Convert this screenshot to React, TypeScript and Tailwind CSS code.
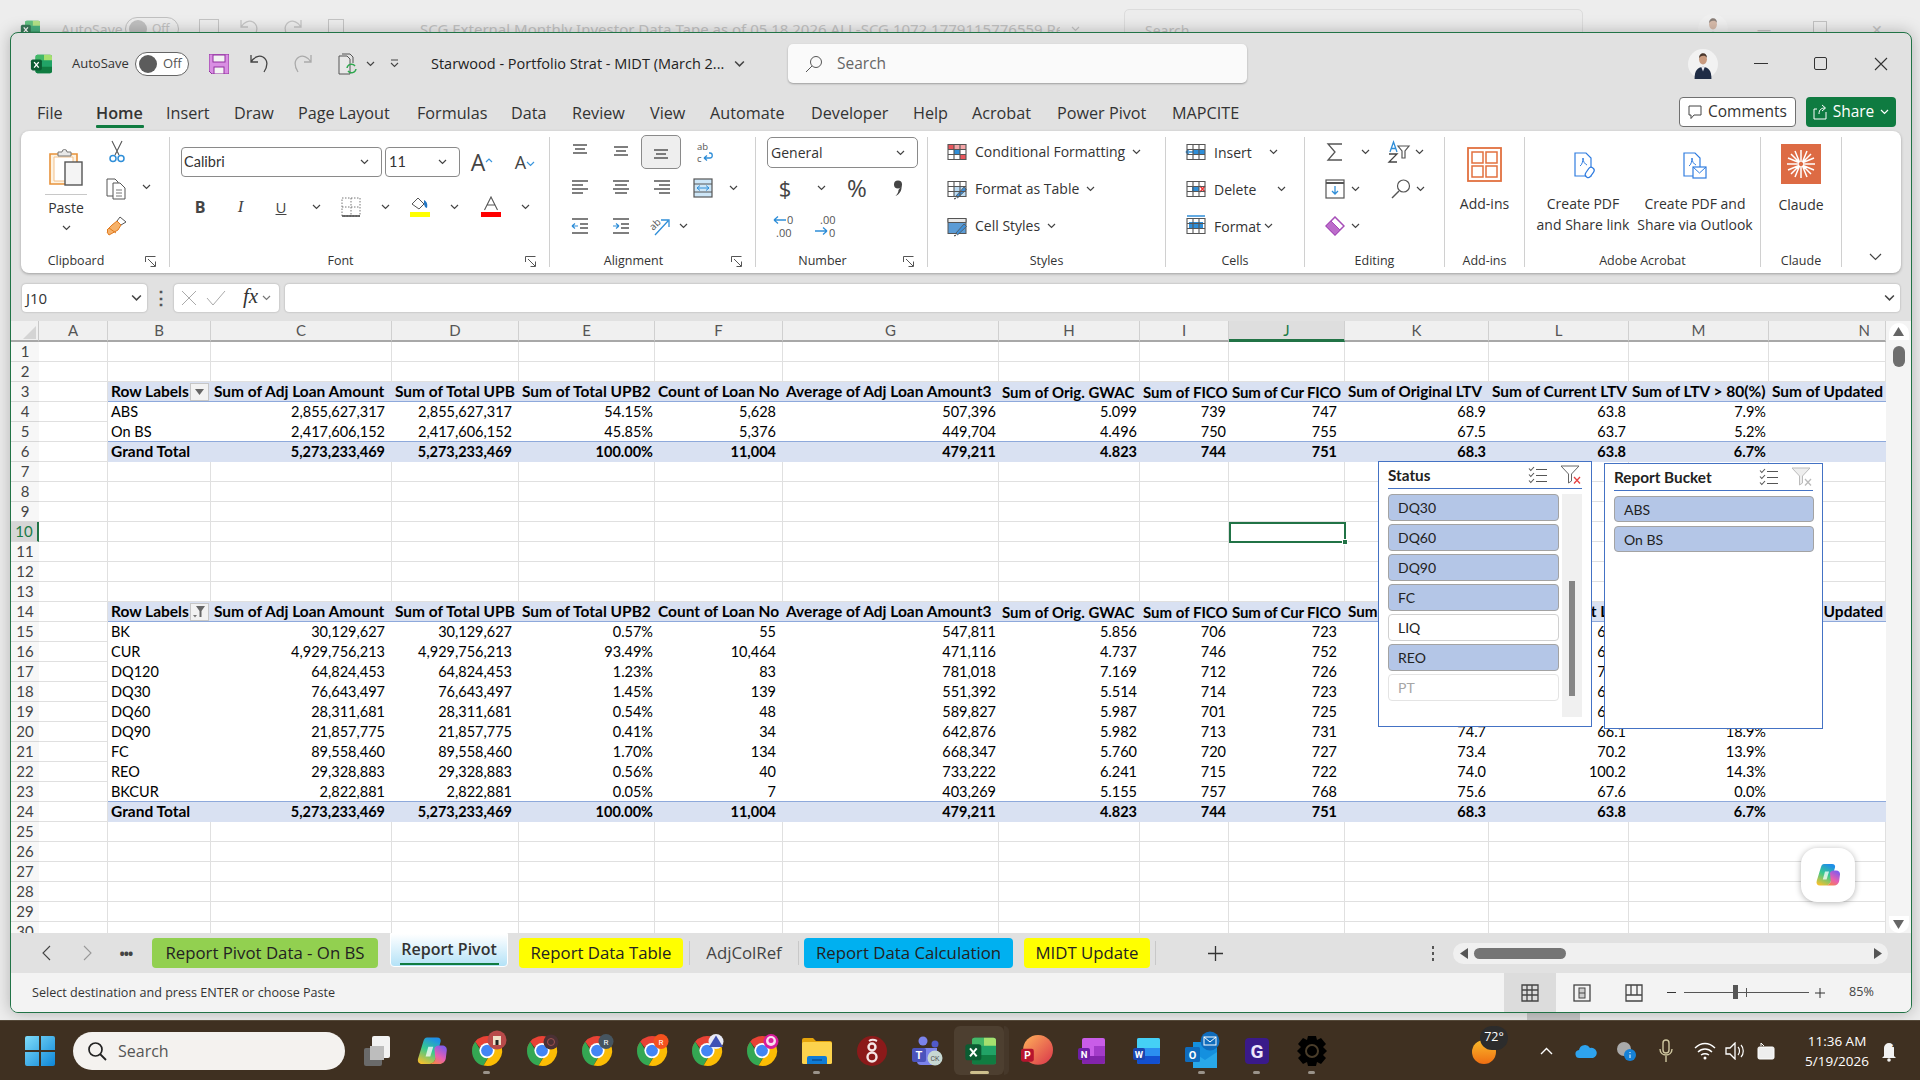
import React from "react";

const Chev = ({ c = "#444", className = "" }: { c?: string; className?: string }) => (
  <svg width="9" height="6" viewBox="0 0 9 6" className={className}><path d="M1 1l3.5 3.5L8 1" fill="none" stroke={c} strokeWidth="1.2" /></svg>
);
const Launcher = () => (
  <svg width="11" height="11" viewBox="0 0 11 11"><path d="M.5 6V.5H10.5M3 3l7 7M5.5 10.5h5v-5" fill="none" stroke="#555" strokeWidth="1" /></svg>
);
const Lines = ({ rows, c = "#555" }: { rows: number[][]; c?: string }) => (
  <svg width="20" height="20" viewBox="0 0 20 20">{rows.map((r, i) => <path key={i} d={`M${r[0]} ${r[2]}H${r[1]}`} stroke={c} strokeWidth="1.4" fill="none" />)}</svg>
);
const Cell = ({ w, children, className = "" }: { w: string; children?: React.ReactNode; className?: string }) => (
  <div className={`${w} flex items-center justify-center shrink-0 ${className}`}>{children}</div>
);

const ExcelIcon = ({ s = 22 }: { s?: number }) => (
  <svg width={s} height={s} viewBox="0 0 24 24">
    <rect x="6" y="2" width="18" height="20" rx="2" fill="#21a366" />
    <path d="M15 2h7a2 2 0 0 1 2 2v4h-9z" fill="#a6e06f" />
    <path d="M6 4a2 2 0 0 1 2-2h7v6H6z" fill="#43b868" />
    <path d="M6 15h18v5a2 2 0 0 1-2 2H8a2 2 0 0 1-2-2z" fill="#107c41" />
    <rect x="1" y="7" width="12" height="12" rx="2" fill="#0b5c32" />
    <path d="M4.5 10l5 6M9.5 10l-5 6" stroke="#fff" strokeWidth="1.5" />
  </svg>
);
const Avatar = ({ s = 32 }: { s?: number }) => (
  <svg width={s} height={s} viewBox="0 0 32 32">
    <circle cx="16" cy="16" r="16" fill="#f2f2f2" />
    <path d="M7 32c0-9 3-12 9-13 6 1 9 4 9 13z" fill="#1f2c45" />
    <path d="M14 19l2 5 2-5z" fill="#e8e8f0" />
    <ellipse cx="16" cy="11" rx="4.2" ry="5.4" fill="#c99a7e" />
    <path d="M11.8 10c0-4 2-5.6 4.4-5.6s4 1.6 4 5c-1-1.8-2.4-2.4-4.2-2.2-2 .2-3.4 1-4.2 2.8z" fill="#4a372c" />
  </svg>
);
const GridIcon = ({ children }: { children?: React.ReactNode }) => (
  <svg width="22" height="22" viewBox="0 0 22 22">
    {children}
    <path d="M2 3.5h18v15H2zM2 8.5h18M2 13.5h18M8 3.5v15M14 3.5v15" fill="none" stroke="#555" strokeWidth="1.1" />
  </svg>
);
const Brush = () => <path d="M10 18l8-9 2.5 2.5-9 8.5zM9 20l-1 1 2-.5z" fill="#3e8fd8" stroke="#555" strokeWidth=".8" />;

const Chrome = ({ badge }: { badge?: React.ReactNode }) => (
  <svg width="34" height="34" viewBox="0 0 34 34" className="overflow-visible">
    <path d="M2 17A15 15 0 0 1 30 9.5H17a7.5 7.5 0 0 0-7 4.5L5.2 7.8z" fill="#e94235" />
    <path d="M2 17c0-3.600 1.200-6.800 3.300-9.300L12 19c1.300 2.400 4 3.800 6.600 3.300l-5 9.300C6.900 30.500 2 24.400 2 17z" fill="#34a853" />
    <path d="M30 9.500A15 15 0 0 1 13.600 31.600L20.600 19.800c1.800-2.500 1.600-6.700-3.600-10.300z" fill="#fbbc04" />
    <circle cx="17" cy="16.600" r="7.600" fill="#fff" />
    <circle cx="17" cy="16.600" r="5.900" fill="#4285f4" />
    {badge}
  </svg>
);
const Copilot = ({ s = 26, id }: { s?: number; id: string }) => (
  <svg width={s} height={s} viewBox="0 0 26 26">
    <defs>
      <linearGradient id={`${id}a`} x1="0.6" y1="0" x2="0.2" y2="1"><stop offset="0" stopColor="#1f8fe8" /><stop offset=".45" stopColor="#37c98f" /><stop offset="1" stopColor="#f7c02c" /></linearGradient>
      <linearGradient id={`${id}b`} x1="0.8" y1="0" x2="0.2" y2="1"><stop offset="0" stopColor="#7a5cf0" /><stop offset=".55" stopColor="#e85fb0" /><stop offset="1" stopColor="#f58a3c" /></linearGradient>
    </defs>
    <path d="M9 2h8c2.500 0 3.500 1.600 3 3.500L16 19c-.7 2.400-2.700 4.500-5.500 4.500H5c-2.800 0-4-2-3.300-4.500L6 5c.5-1.800 1.500-3 3-3z" fill={`url(#${id}a)`} />
    <path d="M15 11c.5-1.500 1.800-2.500 3.500-2.500H21c2.800 0 4.300 1.700 4 4l-.8 6.500c-.4 2.500-2.500 4.500-5.200 4.500H10.500c2.600 0 4.600-1.800 5.200-4z" fill={`url(#${id}b)`} />
    <path d="M10 9.500h4l-2.400 8h-3.800z" fill="#fff" opacity=".75" />
  </svg>
);

const TABS: [string, string][] = [
  ["File", "w-[59px]"], ["Home", "w-[70px]"], ["Insert", "w-[68px]"], ["Draw", "w-[64px]"], ["Page Layout", "w-[119px]"],
  ["Formulas", "w-[94px]"], ["Data", "w-[61px]"], ["Review", "w-[78px]"], ["View", "w-[60px]"], ["Automate", "w-[101px]"],
  ["Developer", "w-[102px]"], ["Help", "w-[59px]"], ["Acrobat", "w-[85px]"], ["Power Pivot", "w-[115px]"], ["MAPCITE", "w-[90px]"],
];
const COLS = ["A", "B", "C", "D", "E", "F", "G", "H", "I", "J", "K", "L", "M", "N"];
const GRID = "grid grid-cols-[28px_69px_103px_181px_127px_136px_128px_216px_141px_89px_116px_144px_140px_140px_117px]";
const PAD = ["pr-[7px]", "pr-[7px]", "pr-[2px]", "pr-[7px]", "pr-[3px]", "pr-[3px]", "pr-[3px]", "pr-[8px]", "pr-[3px]", "pr-[3px]", "pr-[3px]", "pr-[3px]"];
const HEADSZ = ["text-[15.5px]", "text-[15.5px]", "text-[15.5px]", "text-[15.5px]", "text-[15.5px]", "text-[15.5px]", "text-[15px]", "text-[15px]", "text-[15px] tracking-[-0.2px]", "text-[15.2px]", "text-[15.5px]", "text-[15.5px]", "text-[15.5px]"];

const HEAD = ["Row Labels", "Sum of Adj Loan Amount", "Sum of Total UPB", "Sum of Total UPB2", "Count of Loan No", "Average of Adj Loan Amount3", "Sum of Orig. GWAC", "Sum of FICO", "Sum of Cur FICO", "Sum of Original LTV", "Sum of Current LTV", "Sum of LTV > 80(%)", "Sum of Updated"];
const TOTAL = ["Grand Total", "5,273,233,469", "5,273,233,469", "100.00%", "11,004", "479,211", "4.823", "744", "751", "68.3", "63.8", "6.7%", ""];
const DATA: Record<number, string[]> = {
  4: ["ABS", "2,855,627,317", "2,855,627,317", "54.15%", "5,628", "507,396", "5.099", "739", "747", "68.9", "63.8", "7.9%", ""],
  5: ["On BS", "2,417,606,152", "2,417,606,152", "45.85%", "5,376", "449,704", "4.496", "750", "755", "67.5", "63.7", "5.2%", ""],
  15: ["BK", "30,129,627", "30,129,627", "0.57%", "55", "547,811", "5.856", "706", "723", "70.4", "66.0", "12.1%", ""],
  16: ["CUR", "4,929,756,213", "4,929,756,213", "93.49%", "10,464", "471,116", "4.737", "746", "752", "67.9", "63.5", "6.2%", ""],
  17: ["DQ120", "64,824,453", "64,824,453", "1.23%", "83", "781,018", "7.169", "712", "726", "74.4", "70.4", "15.2%", ""],
  18: ["DQ30", "76,643,497", "76,643,497", "1.45%", "139", "551,392", "5.514", "714", "723", "72.2", "66.2", "11.8%", ""],
  19: ["DQ60", "28,311,681", "28,311,681", "0.54%", "48", "589,827", "5.987", "701", "725", "72.9", "65.8", "10.4%", ""],
  20: ["DQ90", "21,857,775", "21,857,775", "0.41%", "34", "642,876", "5.982", "713", "731", "74.7", "66.1", "18.9%", ""],
  21: ["FC", "89,558,460", "89,558,460", "1.70%", "134", "668,347", "5.760", "720", "727", "73.4", "70.2", "13.9%", ""],
  22: ["REO", "29,328,883", "29,328,883", "0.56%", "40", "733,222", "6.241", "715", "722", "74.0", "100.2", "14.3%", ""],
  23: ["BKCUR", "2,822,881", "2,822,881", "0.05%", "7", "403,269", "5.155", "757", "768", "75.6", "67.6", "0.0%", ""],
};
const TOTAL_ROWS = [6, 24];
const HEAD_ROWS = [3, 14];

const RowHead = ({ n }: { n: number }) => (
  <div className={`flex items-center justify-center border-b border-[#d8d8d8] text-[15px] leading-none ${n === 10 ? "bg-[#d6d6d6] text-[#1a7a46] border-r-2 border-r-[#217346]" : "bg-[#f7f7f7] text-[#444]"}`}>{n}</div>
);
const FilterBtn = ({ active }: { active?: boolean }) => (
  <div className="ml-auto mr-[2px] w-[19px] h-[18px] -mt-[1px] bg-[#f2f2f2] border border-[#c6c6c6] flex items-center justify-center shrink-0">
    {active ? (
      <svg width="13" height="13" viewBox="0 0 13 13"><path d="M3 1h9L8.500 6v6h-2V6z" fill="#666" /><path d="M0 10h4l-2 2.500z" fill="#777" /></svg>
    ) : (
      <svg width="9" height="6" viewBox="0 0 9 6"><path d="M0 0h9L4.500 6z" fill="#666" /></svg>
    )}
  </div>
);

const Row = ({ n }: { n: number }) => {
  const h = HEAD_ROWS.includes(n);
  const t = TOTAL_ROWS.includes(n);
  const vals = h ? HEAD : t ? TOTAL : DATA[n];
  const plain = "border-b border-r border-[#e0e0e0]";
  if (!vals) {
    return (
      <div className={`${GRID} grid-rows-[20px] h-[20px]`}>
        <RowHead n={n} />
        {COLS.map((c) => <div key={c} className={plain} />)}
      </div>
    );
  }
  const lastBlue = n === 5 || n === 23;
  const rowCls = h ? "bg-[#d9e1f2] border-b border-[#8ea9db] font-bold" : t ? "bg-[#d9e1f2] border-b border-[#d9e1f2] font-bold" : lastBlue ? "border-b border-[#8ea9db]" : "border-b border-transparent";
  return (
    <div className={`${GRID} grid-rows-[20px] h-[20px]`}>
      <RowHead n={n} />
      <div className={plain} />
      {vals.map((v, i) => (
        <div key={i} className={`${rowCls} flex items-center whitespace-nowrap overflow-hidden text-black leading-none pt-[1px] ${h ? HEADSZ[i] : t && i === 0 ? "text-[15.5px]" : "text-[14.5px]"} ${h || i === 0 ? "pl-[3px]" : `justify-end ${PAD[i - 1]}`}`}>
          {v}
          {h && i === 0 && <FilterBtn active={n === 14} />}
        </div>
      ))}
    </div>
  );
};

const SelectAll = () => (
  <svg width="20" height="18" viewBox="0 0 20 18"><path d="M1 2.500l1.800 2L6 1M1 8.500l1.800 2L6 7M1 14.500l1.800 2L6 13" fill="none" stroke="#555" strokeWidth="1.1" /><path d="M8 3.500h11M8 9.500h11M8 15.500h11" stroke="#555" strokeWidth="1.2" /></svg>
);
const ClearFilter = ({ on }: { on: boolean }) => (
  <svg width="21" height="20" viewBox="0 0 21 20"><path d="M1 1h18l-7.500 8v7l-3 2V9z" fill={on ? "#fff" : "#eee"} stroke={on ? "#666" : "#bbb"} strokeWidth="1" /><path d="M14 12l6 6.500M20 12l-6 6.500" stroke={on ? "#e64040" : "#bbb"} strokeWidth="1.3" /></svg>
);
const SlicerBtn = ({ t, state, h }: { t: string; state: "on" | "off" | "dim"; h: string }) => (
  <div className={`${h} rounded-[4px] pl-[9px] flex items-center text-[14px] border ${state === "on" ? "bg-[#b4c6e7] border-[#a3a3a3] text-[#222]" : state === "off" ? "bg-white border-[#d0d0d0] text-[#222]" : "bg-white border-[#e4e4e4] text-[#a6a6a6]"}`}>{t}</div>
);

const StatusSlicer = () => (
  <div className="absolute left-[1367px] top-[140px] w-[214px] h-[266px] bg-white border-[1.5px] border-[#4472c4] pl-[9px] pr-[9px]">
    <div className="h-[27px] flex items-center border-b border-[#4472c4] font-bold text-[15.3px] text-[#222]">
      <span>Status</span>
      <div className="ml-auto mr-[12px]"><SelectAll /></div>
      <div className="mr-[1px]"><ClearFilter on /></div>
    </div>
    <div className="flex mt-[5px]">
      <div className="w-[171px] flex flex-col gap-[3px]">
        <SlicerBtn t="DQ30" state="on" h="h-[27px]" />
        <SlicerBtn t="DQ60" state="on" h="h-[27px]" />
        <SlicerBtn t="DQ90" state="on" h="h-[27px]" />
        <SlicerBtn t="FC" state="on" h="h-[27px]" />
        <SlicerBtn t="LIQ" state="off" h="h-[27px]" />
        <SlicerBtn t="REO" state="on" h="h-[27px]" />
        <SlicerBtn t="PT" state="dim" h="h-[27px]" />
      </div>
      <div className="ml-[3px] w-[20px] h-[223px] bg-[#f0f0f0] pt-[87px] flex justify-center">
        <div className="w-[6px] h-[115px] bg-[#868686]" />
      </div>
    </div>
  </div>
);
const BucketSlicer = () => (
  <div className="absolute left-[1593px] top-[142px] w-[219px] h-[266px] bg-white border-[1.5px] border-[#4472c4] pl-[9px] pr-[8px]">
    <div className="h-[27px] flex items-center border-b border-[#4472c4] font-bold text-[15.3px] text-[#222] mr-[1px]">
      <span>Report Bucket</span>
      <div className="ml-auto mr-[12px]"><SelectAll /></div>
      <div className="mr-[1px]"><ClearFilter on={false} /></div>
    </div>
    <div className="flex flex-col gap-[4px] mt-[5px]">
      <SlicerBtn t="ABS" state="on" h="h-[26px]" />
      <SlicerBtn t="On BS" state="on" h="h-[26px]" />
    </div>
  </div>
);

const Group = ({ w, label, launcher, children }: { w: string; label?: string; launcher?: boolean; children: React.ReactNode }) => (
  <div className={`${w} h-[130px] mt-[6px] flex flex-col shrink-0 border-r border-[#d0d0d0] relative`}>
    <div className="flex-1 min-h-0">{children}</div>
    {label && (
      <div className={`h-[12px] flex items-center justify-center text-[12.5px] text-[#333] relative ${launcher ? "pr-[38px]" : ""}`}>
        {label}
        {launcher && <div className="absolute right-[13px] top-[1px]"><Launcher /></div>}
      </div>
    )}
  </div>
);

const rowsTop = [[3, 17, 3], [5, 15, 7], [3, 17, 11]];
const rowsMid = [[3, 17, 5], [5, 15, 9], [3, 17, 13]];
const rowsBot = [[3, 17, 8], [5, 15, 12], [3, 17, 16]];
const aLeft = [[2, 18, 3], [2, 13, 7], [2, 18, 11], [2, 13, 15]];
const aCen = [[2, 18, 3], [4, 16, 7], [2, 18, 11], [4, 16, 15]];
const aRight = [[2, 18, 3], [7, 18, 7], [2, 18, 11], [7, 18, 15]];

const RibbonText = ({ children }: { children: React.ReactNode }) => <span className="text-[14px] text-[#333] whitespace-nowrap">{children}</span>;

const Ribbon = () => (
  <div className="ml-[10px] w-[1880px] h-[142px] bg-white rounded-[8px] shadow-[0_1px_3px_rgba(0,0,0,0.3)] flex overflow-hidden">
    <Group w="w-[149px]" label="Clipboard" launcher>
      <div className="flex pt-[10px]">
        <div className="ml-[24px] w-[42px] flex flex-col items-center">
          <svg width="36" height="40" viewBox="0 0 36 40"><path d="M2 7h27v30H2z" fill="#fdf3e3" stroke="#e8923a" strokeWidth="1.6" /><path d="M6 10h19v24H6z" fill="#fff" stroke="#f3c089" /><path d="M10 9V5h4a2.500 2.500 0 0 1 5 0h4v4z" fill="#e8e8e8" stroke="#777" /><rect x="17" y="15" width="17" height="23" fill="#f4f4f4" stroke="#555" strokeWidth="1.400" /></svg>
          <div className="w-[42px] h-px bg-[#c8c8c8] mt-[7px]" />
          <div className="text-[14px] text-[#333] mt-[2px]">Paste</div>
          <Chev className="mt-[7px]" />
        </div>
        <div className="flex flex-col items-center w-[60px] -mt-[13px]">
          <div className="h-[36px] w-[30px] flex items-center justify-center">
            <svg width="18" height="24" viewBox="0 0 18 24"><path d="M4 1l7 14M14 1L7 15" stroke="#555" strokeWidth="1.1" /><circle cx="5" cy="18.500" r="3" fill="none" stroke="#2f8ed8" strokeWidth="1.500" /><circle cx="13" cy="18.500" r="3" fill="none" stroke="#2f8ed8" strokeWidth="1.500" /></svg>
          </div>
          <div className="h-[37px] flex items-center relative w-[60px] justify-center">
            <svg width="22" height="22" viewBox="0 0 22 22"><path d="M1 1h8l3 3v14H1z" fill="#fff" stroke="#555" /><path d="M7 5h7l5 5v11H7z" fill="#fff" stroke="#555" /><path d="M10 12h6M10 15h6M10 18h6" stroke="#777" /></svg>
            <Chev className="absolute right-[-4px] top-[14px]" />
          </div>
          <div className="h-[37px] flex items-center">
            <svg width="22" height="22" viewBox="0 0 22 22"><path d="M14 2l6 5-5 3-4-4z" fill="#fff" stroke="#555" /><path d="M11 6l4 4-3 5-9 5-2-3 1-1-1-1 5-5z" fill="#f6b26b" stroke="#e07a1f" /><path d="M3 13l7 5" stroke="#e07a1f" /></svg>
          </div>
        </div>
      </div>
    </Group>
    <Group w="w-[380px]" label="Font" launcher>
      <div className="flex pl-[11px] pt-[10px] gap-[3px] items-center">
        <div className="w-[201px] h-[30px] border border-[#8a8a8a] rounded-[4px] flex items-center pl-[2px] pr-[12px] font-['Lato',sans-serif] text-[14.5px] text-[#333] justify-between">Calibri<Chev /></div>
        <div className="w-[75px] h-[30px] border border-[#8a8a8a] rounded-[4px] flex items-center pl-[3px] pr-[12px] font-['Lato',sans-serif] text-[14.5px] text-[#333] justify-between">11<Chev /></div>
        <Cell w="w-[38px]"><span className="text-[23px] text-[#444] leading-none">A</span><svg width="8" height="5" viewBox="0 0 8 5" className="self-start mt-[7px]"><path d="M1 4l3-3 3 3" fill="none" stroke="#3a96dd" strokeWidth="1.200" /></svg></Cell>
        <Cell w="w-[42px]"><span className="text-[18px] text-[#444] leading-none">A</span><Chev c="#3a96dd" className="self-start mt-[8px]" /></Cell>
      </div>
      <div className="flex items-center pl-[10px] mt-[15px] h-[30px]">
        <Cell w="w-[40px]"><span className="font-bold text-[16px] text-[#444]">B</span></Cell>
        <Cell w="w-[41px]"><span className="italic text-[17px] text-[#444] font-['Liberation_Serif',serif]">I</span></Cell>
        <Cell w="w-[40px]"><span className="underline text-[15px] text-[#444]">U</span></Cell>
        <Cell w="w-[30px]"><Chev /></Cell>
        <Cell w="w-[40px]"><svg width="20" height="20" viewBox="0 0 20 20"><path d="M1 1h18v18H1zM10 1v18M1 10h18" fill="none" stroke="#777" strokeDasharray="1.500 1.500" /><path d="M1 19h18" stroke="#444" strokeWidth="1.500" /></svg></Cell>
        <Cell w="w-[28px]"><Chev /></Cell>
        <Cell w="w-[42px]"><svg width="20" height="24" viewBox="0 0 20 24"><path d="M2 9l6-6 6 6-5 5z" fill="#fff" stroke="#555" /><path d="M14 5c2 1 4 3 3 8-2 0-3-3-3-5z" fill="#2377c5" /><rect y="17" width="20" height="5" fill="#ffff00" /></svg></Cell>
        <Cell w="w-[26px]"><Chev /></Cell>
        <Cell w="w-[48px]"><svg width="20" height="24" viewBox="0 0 20 24"><path d="M3.500 15L10 2l6.500 13M6 10h8" fill="none" stroke="#555" strokeWidth="1.100" /><rect y="17" width="20" height="5" fill="#ff0000" /></svg></Cell>
        <Cell w="w-[20px]"><Chev /></Cell>
      </div>
    </Group>
    <Group w="w-[206px]" label="Alignment" launcher>
      <div className="flex items-center h-[38px] -mt-[6px] pl-[9px] pt-[4px]">
        <Cell w="w-[41px]"><Lines rows={rowsTop} /></Cell>
        <Cell w="w-[41px]"><Lines rows={rowsMid} /></Cell>
        <Cell w="w-[40px]" className="h-[34px] bg-[#eeeeee] border border-[#8a8a8a] rounded-[5px]"><Lines rows={rowsBot} /></Cell>
        <Cell w="w-[42px]"><svg width="20" height="24" viewBox="0 0 20 24" className="ml-[3px] mt-[2px]"><text x="3" y="9" fontSize="9.500" fill="#555" fontFamily="Open Sans">ab</text><text x="3" y="21" fontSize="9.500" fill="#555" fontFamily="Open Sans">c</text><path d="M10 17h6c3 0 3-5 0-5h-1M10 17l3-2.500M10 17l3 2.500" fill="none" stroke="#2f8ed8" strokeWidth="1.300" /></svg></Cell>
      </div>
      <div className="flex items-center h-[38px] pl-[9px]">
        <Cell w="w-[41px]"><Lines rows={aLeft} /></Cell>
        <Cell w="w-[41px]"><Lines rows={aCen} /></Cell>
        <Cell w="w-[41px]"><Lines rows={aRight} /></Cell>
        <Cell w="w-[41px]"><svg width="20" height="20" viewBox="0 0 20 20"><rect x="1" y="1" width="18" height="18" fill="#cde6f7" stroke="#555" strokeWidth="1.200" /><path d="M1 6h18M1 14h18" stroke="#555" /><path d="M4 10h12M4 10l3-2.500M4 10l3 2.500M16 10l-3-2.500M16 10l-3 2.500" fill="none" stroke="#2f8ed8" /></svg></Cell>
        <Cell w="w-[20px]"><Chev /></Cell>
      </div>
      <div className="flex items-center h-[38px] pl-[9px]">
        <Cell w="w-[41px]"><svg width="20" height="20" viewBox="0 0 20 20"><path d="M2 3h16M10 8h8M10 12h8M2 17h16" stroke="#555" strokeWidth="1.300" /><path d="M2 10h6M2 10l3-2.500M2 10l3 2.500" fill="none" stroke="#2f8ed8" strokeWidth="1.200" /></svg></Cell>
        <Cell w="w-[41px]"><svg width="20" height="20" viewBox="0 0 20 20"><path d="M2 3h16M10 8h8M10 12h8M2 17h16" stroke="#555" strokeWidth="1.300" /><path d="M8 10H2M8 10L5 7.500M8 10l-3 2.500" fill="none" stroke="#2f8ed8" strokeWidth="1.200" /></svg></Cell>
        <Cell w="w-[36px]"><svg width="24" height="22" viewBox="0 0 24 22"><path d="M8 20L21 6M14 5h8v7" fill="none" stroke="#2f8ed8" strokeWidth="1.300" /><text x="3" y="14" fontSize="10" fill="#555" fontFamily="Open Sans" transform="rotate(-45 7 11)">ab</text></svg></Cell>
        <Cell w="w-[12px]"><Chev /></Cell>
      </div>
    </Group>
    <Group w="w-[172px]" label="Number" launcher>
      <div className="pl-[11px]">
        <div className="w-[151px] h-[31px] border border-[#8a8a8a] rounded-[5px] flex items-center pl-[3px] pr-[12px] justify-between text-[14px] text-[#333]">General<Chev /></div>
      </div>
      <div className="flex items-center h-[40px] pl-[13px]">
        <Cell w="w-[32px]"><span className="text-[22px] text-[#444]">$</span></Cell>
        <Cell w="w-[40px]"><Chev /></Cell>
        <Cell w="w-[32px]"><span className="text-[24px] text-[#444]">%</span></Cell>
        <Cell w="w-[50px]"><svg width="10" height="17" viewBox="0 0 10 17"><circle cx="5" cy="4.500" r="4" fill="#444" /><path d="M8.500 6c.5 4-1.500 8-6 10 2-2 3-4 3-6z" fill="#444" /></svg></Cell>
      </div>
      <div className="flex items-center h-[36px] pl-[13px]">
        <Cell w="w-[32px]"><svg width="26" height="26" viewBox="0 0 26 26"><path d="M2 7h12M2 7l4-3.500M2 7l4 3.500" fill="none" stroke="#2f8ed8" strokeWidth="1.300" /><text x="15" y="11" fontSize="11" fill="#555" fontFamily="Open Sans">0</text><text x="4" y="24" fontSize="11" fill="#555" fontFamily="Open Sans">.00</text></svg></Cell>
        <Cell w="w-[9px]" />
        <Cell w="w-[32px]"><svg width="26" height="26" viewBox="0 0 26 26"><text x="7" y="11" fontSize="11" fill="#555" fontFamily="Open Sans">.00</text><path d="M14 18H2M14 18l-4-3.500M14 18l-4 3.500" fill="none" stroke="#2f8ed8" strokeWidth="1.300" /><text x="16" y="24" fontSize="11" fill="#555" fontFamily="Open Sans">0</text></svg></Cell>
      </div>
    </Group>
    <Group w="w-[238px]" label="Styles">
      <div className="pl-[18px] -mt-[4px] flex flex-col">
        <div className="h-[37px] flex items-center gap-[7px]">
          <svg width="22" height="22" viewBox="0 0 22 22"><rect x="2" y="3.500" width="6" height="5" fill="#e9565c" /><rect x="8" y="8.500" width="6" height="5" fill="#2f8ed8" /><rect x="14" y="13.500" width="6" height="5" fill="#e9565c" /><rect x="8" y="3.500" width="12" height="5" fill="#f4a6a8" /><path d="M2 3.500h18v15H2zM2 8.500h18M2 13.500h18M8 3.500v15M14 3.500v15" fill="none" stroke="#555" strokeWidth="1.100" /></svg>
          <RibbonText>Conditional Formatting</RibbonText><Chev />
        </div>
        <div className="h-[37px] flex items-center gap-[7px]">
          <GridIcon><rect x="8" y="8.500" width="12" height="10" fill="#bcdcf4" /><Brush /></GridIcon>
          <RibbonText>Format as Table</RibbonText><Chev />
        </div>
        <div className="h-[37px] flex items-center gap-[7px]">
          <svg width="22" height="22" viewBox="0 0 22 22"><rect x="2" y="3.500" width="18" height="15" fill="#5b9bd5" stroke="#555" /><path d="M2 3.500h18v4H2z" fill="#e8e8e8" stroke="#555" /><Brush /></svg>
          <RibbonText>Cell Styles</RibbonText><Chev />
        </div>
      </div>
    </Group>
    <Group w="w-[139px]" label="Cells">
      <div className="pl-[19px] -mt-[4px] flex flex-col">
        <div className="h-[37px] flex items-center">
          <GridIcon><rect x="8" y="8.500" width="12" height="5" fill="#2f8ed8" /><path d="M1 11h7M1 11l3-2.500M1 11l3 2.500" fill="none" stroke="#2f8ed8" strokeWidth="1.500" /></GridIcon>
          <div className="ml-[7px] w-[55px]"><RibbonText>Insert</RibbonText></div><Chev />
        </div>
        <div className="h-[37px] flex items-center">
          <GridIcon><rect x="7" y="8" width="7" height="6" fill="#2f8ed8" /><path d="M15 8l5 6M20 8l-5 6" stroke="#e33" strokeWidth="1.400" /></GridIcon>
          <div className="ml-[7px] w-[63px]"><RibbonText>Delete</RibbonText></div><Chev />
        </div>
        <div className="h-[37px] flex items-center">
          <GridIcon><rect x="4" y="7" width="14" height="7" fill="#2f8ed8" /><path d="M2 1h18" stroke="#2f8ed8" strokeWidth="1.400" /></GridIcon>
          <div className="ml-[7px] mr-[3px]"><RibbonText>Format</RibbonText></div><Chev />
        </div>
      </div>
    </Group>
    <Group w="w-[140px]">
      <div className="pl-[17px] -mt-[4px] flex flex-col">
        <div className="h-[37px] flex items-center">
          <Cell w="w-[26px]"><svg width="18" height="20" viewBox="0 0 18 20"><path d="M16 2H2l7 8-7 8h14" fill="none" stroke="#555" strokeWidth="1.300" /></svg></Cell>
          <Cell w="w-[34px]"><Chev /></Cell>
          <Cell w="w-[32px]" className="ml-[1px]"><svg width="24" height="24" viewBox="0 0 24 24"><path d="M3 12L6.500 2l3.500 10M4.500 8.500h4" fill="none" stroke="#2f8ed8" strokeWidth="1.300" /><path d="M2 14h8l-8 8h8" fill="none" stroke="#444" strokeWidth="1.300" /><path d="M11 6h11l-4 5v7h-3v-7z" fill="none" stroke="#555" strokeWidth="1.200" /></svg></Cell>
          <Chev />
        </div>
        <div className="h-[37px] flex items-center">
          <Cell w="w-[26px]"><svg width="20" height="20" viewBox="0 0 20 20"><rect x="1" y="1" width="18" height="18" fill="#fff" stroke="#555" strokeWidth="1.200" /><path d="M1 4h18" stroke="#555" strokeWidth="2" /><path d="M10 7v8M7 12l3 3 3-3" fill="none" stroke="#2f8ed8" strokeWidth="1.300" /></svg></Cell>
          <Cell w="w-[14px]"><Chev /></Cell>
          <Cell w="w-[53px]" className="pl-[24px]"><svg width="22" height="22" viewBox="0 0 22 22"><circle cx="13.500" cy="8" r="6" fill="none" stroke="#555" strokeWidth="1.200" /><path d="M9 13L2 20" stroke="#555" strokeWidth="1.400" /></svg></Cell>
          <Chev className="ml-[1px]" />
        </div>
        <div className="h-[37px] flex items-center">
          <Cell w="w-[26px]"><svg width="20" height="20" viewBox="0 0 20 20"><path d="M1 10L10 1l9 9-9 9z" fill="#fff" stroke="#a64db8" strokeWidth="1.500" /><path d="M1 10l5-5 9 9-5 5z" fill="#bc6dcb" stroke="#a64db8" /></svg></Cell>
          <Cell w="w-[14px]"><Chev /></Cell>
        </div>
      </div>
      <div className="absolute bottom-0 left-0 right-0 h-[12px] flex items-center justify-center text-[12.5px] text-[#333]">Editing</div>
    </Group>
    <Group w="w-[80px]" label="Add-ins">
      <div className="flex flex-col items-center pt-[10px]">
        <svg width="35" height="35" viewBox="0 0 35 35"><rect x="1" y="1" width="33" height="33" fill="#fff" stroke="#e2703f" strokeWidth="1.800" /><rect x="5" y="5" width="11" height="11" fill="none" stroke="#e2703f" strokeWidth="1.500" /><rect x="19" y="5" width="11" height="11" fill="none" stroke="#e2703f" strokeWidth="1.500" /><rect x="5" y="19" width="11" height="11" fill="none" stroke="#e2703f" strokeWidth="1.500" /><rect x="19" y="19" width="11" height="11" fill="none" stroke="#e2703f" strokeWidth="1.500" /></svg>
        <div className="text-[14px] text-[#333] mt-[11px]">Add-ins</div>
      </div>
    </Group>
    <Group w="w-[236px]" label="Adobe Acrobat">
      <div className="flex pl-[2px]">
        <div className="w-[112px] flex flex-col items-center pt-[15px] text-center">
          <svg width="26" height="28" viewBox="0 0 26 28" className="ml-[6px]"><path d="M2 1h11l5 5v18H2z" fill="#fff" stroke="#2f7ce0" strokeWidth="1.200" /><path d="M7 14c2-1 3-5 3-8 0 4 2 6 4 7" fill="none" stroke="#2f7ce0" /><rect x="14" y="15" width="6" height="11" rx="3" transform="rotate(35 17 20)" fill="#fff" stroke="#2f7ce0" strokeWidth="1.200" /></svg>
          <div className="text-[14px] leading-[21px] text-[#333] mt-[13px] whitespace-nowrap">Create PDF<br />and Share link</div>
        </div>
        <div className="w-[112px] flex flex-col items-center pt-[15px] text-center">
          <svg width="26" height="28" viewBox="0 0 26 28"><path d="M2 1h11l5 5v18H2z" fill="#fff" stroke="#2f7ce0" strokeWidth="1.200" /><path d="M7 14c2-1 3-5 3-8 0 4 2 6 4 7" fill="none" stroke="#2f7ce0" /><rect x="11" y="15" width="13" height="11" fill="#fff" stroke="#2f7ce0" strokeWidth="1.200" /><path d="M11 15l6.500 6 6.500-6" fill="none" stroke="#2f7ce0" /></svg>
          <div className="text-[14px] leading-[21px] text-[#333] mt-[13px] whitespace-nowrap">Create PDF and<br />Share via Outlook</div>
        </div>
      </div>
    </Group>
    <Group w="w-[81px]" label="Claude">
      <div className="flex flex-col items-center pt-[7px]">
        <div className="w-[40px] h-[40px] bg-[#dd6b44] flex items-center justify-center">
          <svg width="30" height="30" viewBox="0 0 30 30"><path d="M15 1v12M15 17v12M1 15h12M17 15h12M5 5l8.500 8.500M16.500 16.500L25 25M25 5l-8.500 8.500M13.500 16.500L5 25M9 2l4.500 11M16.500 17L21 28M21 2l-4.500 11M13.500 17L9 28M2 9l11 4.500M17 16.500L28 21M2 21l11-4.500M17 13.500L28 9" stroke="#fff" strokeWidth="1.500" /></svg>
        </div>
        <div className="text-[14px] text-[#333] mt-[10px]">Claude</div>
      </div>
    </Group>
    <div className="flex-1 flex items-end justify-center pb-[12px] pl-[8px]">
      <svg width="13" height="8" viewBox="0 0 13 8"><path d="M1 1l5.500 5.500L12 1" fill="none" stroke="#444" strokeWidth="1.200" /></svg>
    </div>
  </div>
);

const GhostBar = () => (
  <div className="absolute left-0 top-0 w-[1920px] h-[58px] flex items-center text-[14px] text-[#c2c2c2] overflow-hidden">
    <div className="ml-[20px] opacity-80"><ExcelIcon s={20} /></div>
    <span className="ml-[21px] w-[64px]">AutoSave</span>
    <div className="w-[54px] h-[24px] border border-[#c0c0c0] rounded-full flex items-center pl-[3px] gap-[5px] text-[12px]"><div className="w-[18px] h-[18px] rounded-full bg-[#c0c0c0]" />Off</div>
    <div className="ml-[20px] w-[20px] h-[20px] border border-[#c4c4c4]" />
    <svg width="20" height="22" viewBox="0 0 20 22" className="ml-[21px]"><path d="M1 2v7h7M1 9c3-5 8-7 12-5 5 3 5 9 1 15" fill="none" stroke="#c4c4c4" strokeWidth="1.300" /></svg>
    <svg width="20" height="22" viewBox="0 0 20 22" className="ml-[22px]"><path d="M19 2v7h-7M19 9c-3-5-8-7-12-5-5 3-5 9-1 15" fill="none" stroke="#c4c4c4" strokeWidth="1.300" /></svg>
    <div className="ml-[26px] w-[16px] h-[20px] border border-[#c4c4c4]" />
    <span className="ml-[76px] w-[640px] whitespace-nowrap overflow-hidden text-[15px]">SCG External Monthly Investor Data Tape as of 05 18 2026 ALL-SCG 1072 1779115776559 Re</span>
    <Chev c="#c2c2c2" className="ml-[11px]" />
    <div className="ml-[44px] w-[459px] h-[60px] mt-[20px] bg-[#ececec] border border-[#dcdcdc] rounded-[5px] pl-[20px] flex items-start pt-[10px]">Search</div>
    <div className="ml-[115px] opacity-60"><Avatar s={30} /></div>
    <span className="ml-[29px]">—</span>
    <div className="ml-[42px] w-[14px] h-[16px] border border-[#c2c2c2]" />
    <span className="ml-[44px]">✕</span>
  </div>
);

const Window = () => (
  <div className="absolute left-[10px] top-[32px] w-[1902px] h-[981px] bg-[#e1e1e1] border border-[#217346] rounded-[8px] shadow-[0_0_16px_rgba(0,0,0,0.25)] overflow-hidden flex flex-col font-['Open_Sans',sans-serif]">
    {/* title bar */}
    <div className="h-[61px] flex items-center shrink-0">
      <div className="ml-[19px]"><ExcelIcon s={22} /></div>
      <span className="ml-[20px] w-[63px] text-[13px] text-[#333]">AutoSave</span>
      <div className="w-[54px] h-[24px] bg-white border border-[#666] rounded-full flex items-center pl-[3px] gap-[6px]">
        <div className="w-[18px] h-[18px] rounded-full bg-[#5c5c5c]" />
        <span className="text-[13px] text-[#555]">Off</span>
      </div>
      <div className="ml-[20px]">
        <svg width="20" height="20" viewBox="0 0 20 20"><path d="M0 0h20v20H3l-3-3z" fill="#d98fe3" stroke="#92309f" /><rect x="4" y="1" width="12" height="7" fill="#f3f3f3" stroke="#92309f" /><rect x="5" y="13" width="10" height="7" fill="#f3f3f3" stroke="#92309f" /></svg>
      </div>
      <div className="ml-[21px]">
        <svg width="20" height="22" viewBox="0 0 20 22"><path d="M1 2v7h7M1 9c3-5 8-7 12-5 5 3 5 9 1 15" fill="none" stroke="#444" strokeWidth="1.300" /></svg>
      </div>
      <div className="ml-[22px]">
        <svg width="20" height="22" viewBox="0 0 20 22"><path d="M19 2v7h-7M19 9c-3-5-8-7-12-5-5 3-5 9-1 15" fill="none" stroke="#aaa" strokeWidth="1.300" /></svg>
      </div>
      <div className="ml-[26px]">
        <svg width="20" height="22" viewBox="0 0 20 22"><path d="M1 3h8l3 3v15H1z" fill="#e8e8e8" stroke="#555" /><path d="M4 1h8l3 3v6" fill="none" stroke="#555" /><path d="M9 15a4.500 4.500 0 0 1 8-2M18 16a4.500 4.500 0 0 1-8 2" fill="none" stroke="#2fa84f" strokeWidth="1.500" /></svg>
      </div>
      <Chev className="ml-[8px]" />
      <svg width="9" height="9" viewBox="0 0 9 9" className="ml-[15px]"><path d="M1 1h7M1 4l3.500 3.500L8 4" fill="none" stroke="#444" strokeWidth="1.100" /></svg>
      <span className="ml-[32px] w-[304px] text-[14.5px] text-[#222] whitespace-nowrap">Starwood - Portfolio Strat - MIDT (March 2...</span>
      <Chev className="scale-125" />
      <div className="ml-[44px] w-[459px] h-[39px] bg-[#fafafa] rounded-[5px] shadow-[0_1px_2px_rgba(0,0,0,0.3)] flex items-center pl-[17px] text-[15.5px] text-[#666]">
        <svg width="18" height="18" viewBox="0 0 18 18"><circle cx="11" cy="7" r="5.500" fill="none" stroke="#555" /><path d="M7 11l-6 6" stroke="#555" /></svg>
        <span className="ml-[14px]">Search</span>
      </div>
      <div className="ml-[441px]"><Avatar s={30} /></div>
      <div className="ml-[36px] w-[14px] h-[1.5px] bg-[#333]" />
      <div className="ml-[46px] w-[13px] h-[13px] border border-[#333] rounded-[2px]" />
      <svg width="14" height="14" viewBox="0 0 14 14" className="ml-[47px]"><path d="M1 1l12 12M13 1L1 13" stroke="#333" strokeWidth="1.100" /></svg>
    </div>
    {/* menu tabs */}
    <div className="h-[37px] flex items-center shrink-0 pl-[26px] text-[16.2px] text-[#333] relative">
      {TABS.map(([t, w]) => (
        <div key={t} className={`${w} h-full flex items-center relative pt-[1px] ${t === "Home" ? "font-semibold" : ""}`}>
          {t}
          {t === "Home" && <div className="absolute left-0 bottom-[3px] w-[48px] h-[3px] bg-[#107c41] rounded-[1px]" />}
        </div>
      ))}
      <div className="absolute left-[1668px] top-[3px] w-[117px] h-[30px] bg-white border border-[#707070] rounded-[4px] flex items-center justify-center gap-[6px] text-[15.5px] text-[#333]">
        <svg width="14" height="15" viewBox="0 0 14 15"><path d="M1 1h12v9H6l-3 3.500V10H1z" fill="none" stroke="#444" /></svg>Comments
      </div>
      <div className="absolute left-[1795px] top-[3px] w-[90px] h-[30px] bg-[#0f7b41] rounded-[4px] flex items-center justify-center gap-[6px] text-[15.5px] text-white">
        <svg width="14" height="16" viewBox="0 0 14 16"><path d="M4 5H1v10h12V8M6 10c0-5 3-6 6-6M9 1l3.500 3L9 7" fill="none" stroke="#fff" /></svg>Share<Chev c="#fff" />
      </div>
    </div>
    <Ribbon />
    {/* formula bar */}
    <div className="h-[48px] shrink-0 flex items-start pt-[11px] pl-[11px]">
      <div className="w-[125px] h-[28px] bg-white rounded-[4px] shadow-[0_0_2px_rgba(0,0,0,0.3)] flex items-center justify-between px-[4px] pr-[6px] text-[15px] text-[#333]">J10<Chev className="scale-125" /></div>
      <Cell w="w-[27px]"><div className="text-[#555] text-[18px] leading-none mt-[4px] tracking-tighter font-bold">⋮</div></Cell>
      <div className="w-[105px] h-[28px] bg-white rounded-[4px] shadow-[0_0_2px_rgba(0,0,0,0.3)] flex items-center pl-[7px] gap-[9px]">
        <svg width="16" height="16" viewBox="0 0 16 16"><path d="M1 1l14 14M15 1L1 15" stroke="#aaa" strokeWidth="1" /></svg>
        <svg width="20" height="16" viewBox="0 0 20 16"><path d="M1 8l6 7L19 1" fill="none" stroke="#aaa" /></svg>
        <span className="italic font-['Liberation_Serif',serif] text-[21px] text-[#333] -mt-[3px] ml-[8px]">fx</span>
        <Chev c="#777" className="-ml-[5px]" />
      </div>
      <div className="ml-[6px] w-[1615px] h-[28px] bg-white rounded-[4px] shadow-[0_0_2px_rgba(0,0,0,0.3)] flex items-center justify-end pr-[6px]"><Chev className="scale-125" /></div>
    </div>
    {/* grid */}
    <div className="h-[612px] shrink-0 flex relative bg-white font-['Lato',sans-serif]">
      <div className="w-[1875px] shrink-0 flex flex-col overflow-hidden">
        <div className={`${GRID} grid-rows-[21px] h-[21px] shrink-0`}>
          <div className="bg-[#f0f0f0] border-b-2 border-[#a8a8a8] border-r border-r-[#c8c8c8] flex items-end justify-end pr-[2px] pb-[1px]">
            <svg width="13" height="13" viewBox="0 0 13 13"><path d="M13 0v13H0z" fill="#d4d4d4" /></svg>
          </div>
          {COLS.map((c) => (
            <div key={c} className={`flex items-center text-[15px] leading-none border-r border-[#d0d0d0] ${c === "N" ? "justify-end pr-[15px]" : "justify-center"} ${c === "J" ? "bg-[#dedede] text-[#1a7a46] border-b-[3px] border-b-[#217346]" : "bg-[#f0f0f0] text-[#555] border-b-2 border-b-[#a8a8a8]"}`}>{c}</div>
          ))}
        </div>
        <div className="flex-1 overflow-hidden relative">
          {Array.from({ length: 30 }, (_, i) => <Row key={i} n={i + 1} />)}
          <div className="absolute left-[1218px] top-[180px] w-[117px] h-[21px] border-2 border-[#217346]">
            <div className="absolute right-[-4px] bottom-[-4px] w-[6px] h-[6px] bg-[#217346] border border-white" />
          </div>
        </div>
      </div>
      <div className="w-[25px] bg-[#f4f4f4] flex flex-col items-center justify-between pt-[2px]">
        <div className="flex flex-col items-center gap-[6px]">
          <div className="w-[20px] h-[17px] bg-white rounded-t-full flex items-center justify-center"><svg width="11" height="9" viewBox="0 0 11 9"><path d="M5.500 0L11 9H0z" fill="#666" /></svg></div>
          <div className="w-[12px] h-[21px] bg-[#6e6e6e] rounded-full" />
        </div>
        <div className="w-[20px] h-[17px] bg-white rounded-b-full flex items-center justify-center"><svg width="11" height="9" viewBox="0 0 11 9"><path d="M5.500 9L11 0H0z" fill="#666" /></svg></div>
      </div>
      <StatusSlicer />
      <BucketSlicer />
      <div className="absolute left-[1790px] top-[527px] w-[54px] h-[54px] bg-white rounded-[16px] shadow-[0_1px_6px_rgba(0,0,0,0.3)] flex items-center justify-center"><Copilot id="cf" /></div>
    </div>
    {/* sheet tabs */}
    <div className="h-[40px] shrink-0 flex items-center text-[16.8px] text-[#222]">
      <Cell w="w-[20px]" className="ml-[25px]"><svg width="9" height="16" viewBox="0 0 9 16"><path d="M8 1L1 8l7 7" fill="none" stroke="#444" strokeWidth="1.100" /></svg></Cell>
      <Cell w="w-[20px]" className="ml-[21px]"><svg width="9" height="16" viewBox="0 0 9 16"><path d="M1 1l7 7-7 7" fill="none" stroke="#999" strokeWidth="1.100" /></svg></Cell>
      <Cell w="w-[20px]" className="ml-[19px] text-[#444] font-bold tracking-[-1px] text-[14px]">•••</Cell>
      <Cell w="w-[226px]" className="ml-[16px] h-[30px] bg-[#92d050] rounded-[4px]">Report Pivot Data - On BS</Cell>
      <div className="ml-[12px] w-[118px] h-[34px] self-start bg-gradient-to-b from-white to-[#b3e2f7] border border-white rounded-b-[4px] flex flex-col items-center font-semibold text-[#333] pt-[4px] text-[16px] leading-[22px] relative">
        Report Pivot
        <div className="absolute left-[9px] bottom-[1px] w-[99px] h-[2px] bg-[#107c41]" />
      </div>
      <Cell w="w-[164px]" className="ml-[11px] h-[30px] bg-[#ffff00] rounded-[4px]">Report Data Table</Cell>
      <div className="ml-[6px] w-px h-[24px] bg-[#c8c8c8]" />
      <Cell w="w-[108px]" className="text-[#444]">AdjColRef</Cell>
      <div className="w-px h-[24px] bg-[#c8c8c8]" />
      <Cell w="w-[209px]" className="ml-[5px] h-[30px] bg-[#00b0f0] rounded-[4px]">Report Data Calculation</Cell>
      <Cell w="w-[126px]" className="ml-[11px] h-[30px] bg-[#ffff00] rounded-[4px]">MIDT Update</Cell>
      <div className="ml-[5px] w-px h-[24px] bg-[#c8c8c8]" />
      <Cell w="w-[20px]" className="ml-[49px]"><svg width="15" height="15" viewBox="0 0 15 15"><path d="M7.500 0v15M0 7.500h15" stroke="#333" strokeWidth="1.300" /></svg></Cell>
      <Cell w="w-[20px]" className="ml-[198px]"><svg width="4" height="15" viewBox="0 0 4 15"><path d="M2 0v3M2 6v3M2 12v3" stroke="#555" strokeWidth="2" /></svg></Cell>
      <div className="ml-[10px] w-[435px] h-[21px] bg-[#f0f0f0] rounded-full flex items-center">
        <Cell w="w-[21px]"><svg width="8" height="11" viewBox="0 0 8 11"><path d="M0 5.500L8 0v11z" fill="#555" /></svg></Cell>
        <div className="w-[92px] h-[11px] bg-[#757575] rounded-full" />
        <div className="flex-1" />
        <Cell w="w-[21px]"><svg width="8" height="11" viewBox="0 0 8 11"><path d="M8 5.500L0 0v11z" fill="#555" /></svg></Cell>
      </div>
    </div>
    {/* status */}
    <div className="flex-1 bg-[#f3f3f3] flex items-center text-[12.6px] text-[#333]">
      <span className="ml-[21px] w-[1472px] whitespace-nowrap pt-[2px]">Select destination and press ENTER or choose Paste</span>
      <Cell w="w-[52px]" className="h-full bg-[#dcdcdc]"><svg width="18" height="18" viewBox="0 0 18 18"><path d="M1 1h16v16H1zM1 6h16M1 11h16M6 1v16M11 1v16" fill="none" stroke="#444" strokeWidth="1.300" /></svg></Cell>
      <Cell w="w-[52px]"><svg width="18" height="18" viewBox="0 0 18 18"><rect x="1" y="1" width="16" height="16" fill="none" stroke="#444" strokeWidth="1.300" /><rect x="6" y="4" width="6" height="10" fill="#ccc" stroke="#444" /><path d="M6 9h6" stroke="#444" /></svg></Cell>
      <Cell w="w-[52px]"><svg width="18" height="18" viewBox="0 0 18 18"><path d="M1 1h16v16H1zM1 11h16M6 1v10M12 1v10" fill="none" stroke="#444" strokeWidth="1.300" /></svg></Cell>
      <div className="ml-[7px] w-[9px] h-px bg-[#333]" />
      <div className="ml-[8px] w-[125px] h-[1.5px] bg-[#555] relative">
        <div className="absolute left-[49px] top-[-7px] w-[5px] h-[14px] bg-[#555]" />
        <div className="absolute left-[62px] top-[-4px] w-px h-[9px] bg-[#555]" />
      </div>
      <svg width="10" height="10" viewBox="0 0 10 10" className="ml-[6px]"><path d="M5 0v10M0 5h10" stroke="#333" /></svg>
      <span className="ml-[24px] text-[#444]">85%</span>
    </div>
  </div>
);

const TI = ({ children, dot, className = "" }: { children: React.ReactNode; dot?: boolean; className?: string }) => (
  <div className={`w-[55px] h-full shrink-0 flex items-center justify-center relative ${className}`}>
    {children}
    {dot && <div className="absolute bottom-[6px] left-[24px] w-[7px] h-[3px] rounded-full bg-[#9a938a]" />}
  </div>
);

const Taskbar = () => (
  <div className="absolute left-0 top-[1020px] w-[1920px] h-[60px] bg-[#3f3021] border-t border-[#544838] flex items-center font-['Open_Sans',sans-serif]">
    <div className="ml-[25px]">
      <svg width="30" height="30" viewBox="0 0 30 30"><defs><linearGradient id="wn" x1="0" y1="0" x2="1" y2="1"><stop offset="0" stopColor="#7fdcfa" /><stop offset="1" stopColor="#0d86d8" /></linearGradient></defs><path d="M0 2a2 2 0 0 1 2-2h12v14H0zM16 0h12a2 2 0 0 1 2 2v12H16zM0 16h14v14H2a2 2 0 0 1-2-2zM16 16h14v12a2 2 0 0 1-2 2H16z" fill="url(#wn)" /></svg>
    </div>
    <div className="ml-[18px] w-[272px] h-[38px] bg-[#f4f2ef] rounded-full flex items-center pl-[14px] text-[16px] text-[#555]">
      <svg width="20" height="20" viewBox="0 0 20 20"><circle cx="8.500" cy="8.500" r="6.500" fill="none" stroke="#222" strokeWidth="1.700" /><path d="M13 13l6 6" stroke="#222" strokeWidth="1.800" /></svg>
      <span className="ml-[11px]">Search</span>
    </div>
    <div className="ml-[4px] flex h-full items-center">
      <TI><svg width="32" height="34" viewBox="0 0 32 34"><rect x="3" y="14" width="18" height="18" rx="2" fill="#6a6a6a" /><rect x="11" y="2" width="18" height="22" rx="2" fill="#f2f2f2" /><rect x="9" y="12" width="14" height="14" fill="#bdbdbd" /></svg></TI>
      <TI><Copilot s={32} id="ct" /></TI>
      <TI dot><Chrome badge={<g><circle cx="27" cy="6" r="9.500" fill="#b84a4a" /><rect x="23" y="2" width="8" height="9" fill="#f0e0c8" /><rect x="25.500" y="6" width="3" height="5" fill="#222" /></g>} /></TI>
      <TI><Chrome badge={<g><circle cx="26" cy="8" r="7.500" fill="#4a3034" /><circle cx="26" cy="8" r="3.500" fill="none" stroke="#a05050" /></g>} /></TI>
      <TI><Chrome badge={<g><circle cx="26" cy="7.500" r="7.500" fill="#465560" /><text x="26" y="10.500" fontSize="8" fill="#fff" textAnchor="middle" fontFamily="Roboto">R</text></g>} /></TI>
      <TI><Chrome badge={<g><circle cx="26" cy="7.500" r="7.500" fill="#f4511e" /><text x="26" y="10.500" fontSize="8" fill="#fff" textAnchor="middle" fontFamily="Roboto">R</text></g>} /></TI>
      <TI><Chrome badge={<g><circle cx="26" cy="7.500" r="7.500" fill="#e8eaf6" /><path d="M26 1.500L33 13H19z" fill="#3f51b5" /></g>} /></TI>
      <TI><Chrome badge={<g><circle cx="26" cy="7.500" r="7.500" fill="#d81b9a" /><circle cx="26" cy="7" r="5" fill="#f8e0f0" /><circle cx="26" cy="6.500" r="2.500" fill="#d81b9a" /></g>} /></TI>
      <TI dot><svg width="30" height="28" viewBox="0 0 30 28"><path d="M0 3a2 2 0 0 1 2-2h9l3 3h14a2 2 0 0 1 2 2v3H0z" fill="#e5a40b" /><rect y="5" width="30" height="22" rx="1.500" fill="#fcd34d" /><path d="M5 27v-6a2 2 0 0 1 2-2h16a2 2 0 0 1 2 2v6z" fill="#0f7cd6" /><path d="M10 23h10" stroke="#0b4f94" strokeWidth="1.500" /></svg></TI>
      <TI><svg width="30" height="30" viewBox="0 0 30 30"><circle cx="15" cy="15" r="15" fill="#8b1a1a" /><circle cx="15" cy="21" r="4.500" fill="none" stroke="#f5e6e6" strokeWidth="2.400" /><circle cx="15" cy="11" r="3.500" fill="none" stroke="#f5e6e6" strokeWidth="2.400" /><path d="M12 5c3-2 6-1 8 0" stroke="#f5e6e6" strokeWidth="2" fill="none" /></svg></TI>
      <TI><svg width="32" height="30" viewBox="0 0 32 30"><circle cx="12" cy="5" r="4.500" fill="#7b83eb" /><circle cx="24" cy="8" r="3.500" fill="#5059c9" /><path d="M6 12h20v13a4 4 0 0 1-4 4H10a4 4 0 0 1-4-4z" fill="#7b83eb" /><rect x="1" y="12" width="14" height="14" rx="2" fill="#4b53bc" /><text x="8" y="23" fontSize="11" fontWeight="700" fill="#fff" textAnchor="middle" fontFamily="Roboto">T</text><circle cx="24" cy="22" r="7.500" fill="#c7d8d3" /><text x="24" y="25" fontSize="7" fill="#555" textAnchor="middle" fontFamily="Roboto">CK</text></svg></TI>
      <div className="w-[50px] h-[49px] shrink-0 bg-[#4d3f30] rounded-[6px] flex items-center justify-center relative pl-[2px]">
        <ExcelIcon s={32} />
        <div className="absolute bottom-[1px] left-[16px] w-[19px] h-[3px] rounded-full bg-[#cdbf8d]" />
      </div>
      <div className="w-[5px] h-[49px] bg-[#46382a] rounded-r-[6px]" />
      <TI><svg width="32" height="32" viewBox="0 0 30 30"><defs><linearGradient id="pp" x1="0" y1="0" x2="1" y2="1"><stop offset="0" stopColor="#ffb25a" /><stop offset="1" stopColor="#d9344a" /></linearGradient></defs><circle cx="16" cy="14" r="14" fill="url(#pp)" /><rect x="0" y="13" width="12" height="12" rx="2" fill="#b7142e" /><text x="6" y="22.500" fontSize="9.500" fontWeight="700" fill="#fff" textAnchor="middle" fontFamily="Roboto">P</text></svg></TI>
      <TI><svg width="28" height="28" viewBox="0 0 28 28"><rect x="4" y="1" width="23" height="26" rx="2" fill="#c95de8" /><path d="M16 9h11v10H16z" fill="#a33bc9" /><path d="M4 19h23v6a2 2 0 0 1-2 2H6a2 2 0 0 1-2-2z" fill="#8324ab" /><rect y="11" width="12" height="12" rx="2" fill="#6d1fa6" /><text x="6" y="20.500" fontSize="9.500" fontWeight="700" fill="#fff" textAnchor="middle" fontFamily="Roboto">N</text></svg></TI>
      <TI><svg width="28" height="28" viewBox="0 0 28 28"><rect x="4" y="1" width="23" height="26" rx="2" fill="#2b8ff0" /><path d="M4 3a2 2 0 0 1 2-2h19a2 2 0 0 1 2 2v8H4z" fill="#45d0f5" /><path d="M4 19h23v6a2 2 0 0 1-2 2H6a2 2 0 0 1-2-2z" fill="#1350d0" /><rect y="11" width="12" height="12" rx="2" fill="#1a44ae" /><text x="6" y="20.500" fontSize="9.500" fontWeight="700" fill="#fff" textAnchor="middle" fontFamily="Roboto">W</text></svg></TI>
      <TI dot><svg width="38" height="38" viewBox="0 0 38 38" className="overflow-visible"><rect x="10" y="10" width="24" height="26" fill="#1490df" /><path d="M10 20l12 8 12-8v16H10z" fill="#28a8ea" /><rect x="2" y="15" width="15" height="15" rx="1.500" fill="#0f6cbd" /><text x="9.500" y="26.500" fontSize="11" fontWeight="700" fill="#fff" textAnchor="middle" fontFamily="Roboto">O</text><circle cx="27" cy="9" r="9.500" fill="#0f6cbd" /><rect x="21" y="5" width="12" height="8" fill="none" stroke="#fff" /><path d="M21 5l6 5 6-5" fill="none" stroke="#fff" /></svg></TI>
      <TI dot><svg width="26" height="26" viewBox="0 0 26 26"><rect width="24" height="26" x="1" rx="4" fill="#3a1a8a" /><text x="13" y="20" fontSize="19" fontWeight="700" fill="#efe6fa" textAnchor="middle" fontFamily="Roboto">G</text></svg></TI>
      <TI dot><svg width="30" height="30" viewBox="0 0 30 30"><path d="M11 0h8l1 4 4-2 5 6-3 3 4 4-4 4 3 3-5 6-4-2-1 4h-8l-1-4-4 2-5-6 3-3-4-4 4-4-3-3 5-6 4 2z" fill="#000" /><circle cx="15" cy="15" r="6" fill="none" stroke="#4a3d2a" strokeWidth="2" /></svg></TI>
    </div>
    <div className="ml-[133px] relative w-[24px] h-[24px] mt-[2px] rounded-full bg-gradient-to-b from-[#f8b92a] to-[#ee6d12]">
      <div className="absolute left-[8px] top-[-14px] w-[28px] h-[24px] rounded-full bg-[#2c2c2c] text-white text-[12.5px] flex items-center justify-center">72°</div>
    </div>
    <svg width="13" height="8" viewBox="0 0 13 8" className="ml-[44px]"><path d="M1 7l5.500-5.500L12 7" fill="none" stroke="#fff" strokeWidth="1.400" /></svg>
    <svg width="22" height="16" viewBox="0 0 22 16" className="ml-[22px]"><path d="M5 15a4 4 0 0 1-1-8 6 6 0 0 1 11-2 5 5 0 0 1 3 10z" fill="#2ea3ee" /></svg>
    <svg width="22" height="22" viewBox="0 0 22 22" className="ml-[18px]"><circle cx="9" cy="9" r="7" fill="#aaa" /><circle cx="15" cy="15" r="6" fill="#1681d6" /><path d="M15 12v1M15 14.500V18" stroke="#fff" /></svg>
    <svg width="14" height="24" viewBox="0 0 14 24" className="ml-[22px]"><rect x="4" y="1" width="6" height="13" rx="3" fill="none" stroke="#cfc7a0" strokeWidth="1.400" /><path d="M1 10c0 8 12 8 12 0M7 17v6" fill="none" stroke="#cfc7a0" strokeWidth="1.400" /></svg>
    <svg width="22" height="18" viewBox="0 0 22 18" className="ml-[21px]"><path d="M1 6c6-6 14-6 20 0M4 10c4-4 10-4 14 0M7 13c3-2 5-2 8 0" fill="none" stroke="#fff" strokeWidth="1.400" /><circle cx="11" cy="16" r="1.500" fill="#fff" /></svg>
    <svg width="20" height="18" viewBox="0 0 20 18" className="ml-[9px]"><path d="M1 6h4l5-5v16l-5-5H1z" fill="none" stroke="#fff" strokeWidth="1.300" /><path d="M13 5c2 2 2 6 0 8M16 3c3 3 3 9 0 12" fill="none" stroke="#fff" strokeWidth="1.200" /></svg>
    <svg width="20" height="18" viewBox="0 0 20 18" className="ml-[11px]"><rect x="2" y="5" width="16" height="12" rx="1.500" fill="#eee" stroke="#fff" /><path d="M5 4V1l3 3" fill="none" stroke="#fff" /></svg>
    <div className="ml-[29px] w-[64px] text-center text-white text-[13.5px] leading-[20px] whitespace-nowrap">11:36 AM<br />5/19/2026</div>
    <svg width="16" height="22" viewBox="0 0 16 22" className="ml-[12px]"><path d="M3 16V8a5 5 0 0 1 10 0v8l2 2H1z" fill="#f2f2f2" /><circle cx="8" cy="20" r="1.800" fill="#f2f2f2" /><text x="11" y="7" fontSize="7" fill="#333" fontFamily="Roboto" fontWeight="700">z</text></svg>
  </div>
);

export default function App() {
  return (
    <div className="relative w-[1920px] h-[1080px] overflow-hidden bg-[#ededed]">
      <GhostBar />
      <div className="absolute left-[1527px] top-[1013px] w-[53px] h-[7px] bg-[#c8c8c8]" />
      <Window />
      <Taskbar />
    </div>
  );
}
